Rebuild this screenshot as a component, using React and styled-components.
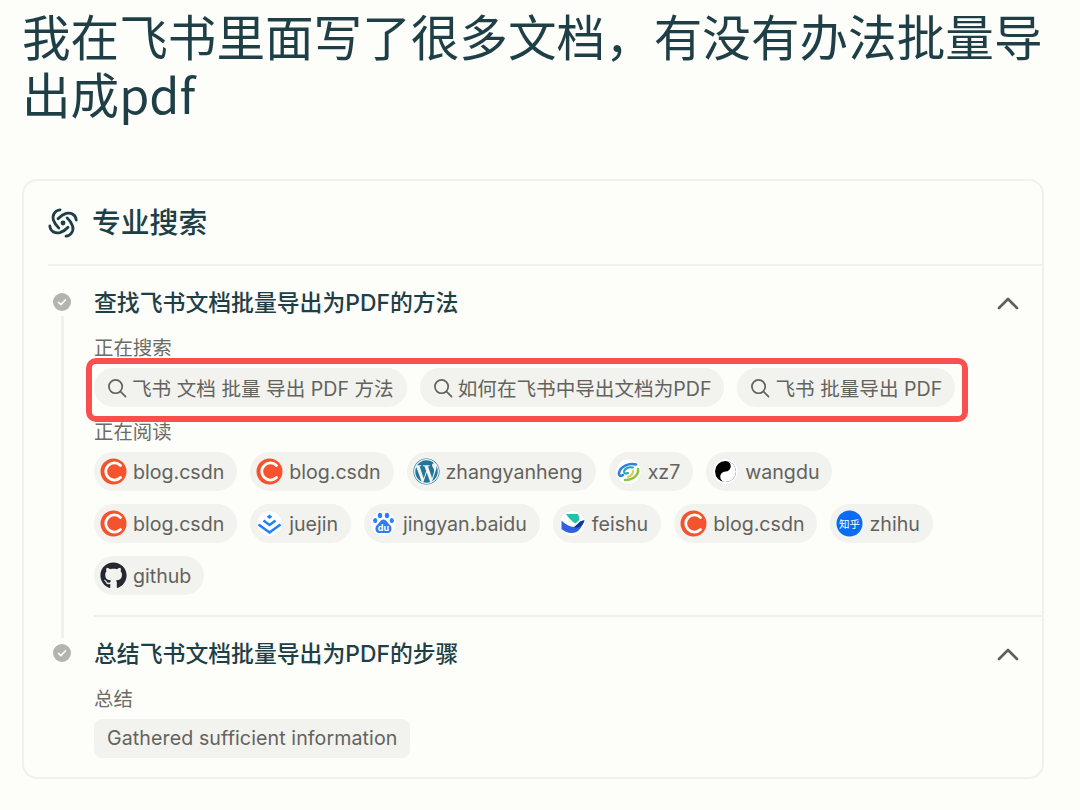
import React from "react"
import styled, { createGlobalStyle } from "styled-components"
import { FaGithub, FaWordpress } from "react-icons/fa"

const sans = `Inter, "Noto Sans CJK SC", "Liberation Sans", sans-serif`

const GlobalStyle = createGlobalStyle`
    html, body {
        margin: 0;
        padding: 0;
        background-color: #fdfdf9;
        font-family: ${sans};
    }
`

const Page = styled.div`
    width: 1080px;
    height: 810px;
    overflow: hidden;
    padding-top: 6px;
    box-sizing: border-box;
`

const Question = styled.h1`
    margin: 0;
    padding: 0 34px 0 22px;
    color: #1f3f47;
    font-family: "Noto Sans CJK SC", Inter, sans-serif;
    font-size: 48.6px;
    font-weight: 400;
    line-height: 58px;
`

const Card = styled.section`
    box-sizing: border-box;
    width: 1022px;
    height: 600px;
    margin: 57px 0 0 22px;
    padding-left: 24px;
    border: 2px solid #f0f0ec;
    border-radius: 15px;
`

const CardHeader = styled.div`
    display: flex;
    align-items: center;
    gap: 14px;
    height: 85px;
    border-bottom: 2px solid #f0f0ec;
    box-sizing: border-box;
`

const CardTitle = styled.h2`
    margin: 0;
    color: #1f3f47;
    font-size: 28.8px;
    font-weight: 500;
    line-height: 36px;
`

const Step = styled.div`
    display: flex;
`

const Rail = styled.div`
    display: flex;
    flex-direction: column;
    align-items: center;
    flex: none;
    width: 28px;
    margin-right: 18px;
    padding-top: 27px;
`

const Dot = styled.div`
    display: flex;
    align-items: center;
    justify-content: center;
    flex: none;
    width: 18px;
    height: 18px;
    border-radius: 50%;
    background-color: #b4b4ae;
`

const RailLine = styled.div`
    flex: 1;
    width: 3px;
    margin-top: 5px;
    margin-bottom: -21px;
    background-color: #f0f0ec;
`

const StepBody = styled.div`
    flex: 1;
    min-width: 0;
    padding-top: 21px;
    padding-bottom: ${(props) => (props.$divided ? "20px" : "0")};
    border-bottom: ${(props) => (props.$divided ? "2px solid #f0f0ec" : "none")};
`

const StepHeader = styled.div`
    display: flex;
    align-items: center;
    justify-content: space-between;
    height: 32px;
    padding-right: 23px;
    margin-bottom: 16px;
`

const StepTitle = styled.h3`
    margin: 0;
    color: #1f3f47;
    font-size: 22.85px;
    font-weight: 500;
    line-height: 32px;
`

const Label = styled.div`
    color: #6c6c66;
    font-size: 19.4px;
    line-height: 26px;
`

const ChipRow = styled.div`
    position: relative;
    display: flex;
    flex-wrap: wrap;
    gap: 13px;
    margin-top: ${(props) => props.$top}px;
    margin-bottom: ${(props) => props.$bottom || 0}px;
`

const Highlight = styled.div`
    position: absolute;
    top: -10px;
    left: -8px;
    width: 882px;
    height: 64px;
    box-sizing: border-box;
    border: 6px solid #f94f4f;
    border-radius: 10px;
`

const Chip = styled.div`
    display: flex;
    align-items: center;
    gap: ${(props) => (props.$search ? "5px" : "6px")};
    height: 39px;
    padding: 0 13px 0 ${(props) => (props.$search ? "13px" : "6px")};
    border-radius: 20px;
    background-color: #f2f2ef;
    color: #63635d;
    font-size: 19.6px;
    white-space: nowrap;
`

const IconBox = styled.span`
    display: flex;
    flex: none;
    width: 27px;
    height: 27px;
    color: ${(props) => props.$color || "inherit"};
`

const Summary = styled.div`
    display: inline-block;
    margin-top: 7px;
    padding: 0 13px;
    border-radius: 8px;
    background-color: #f2f2ef;
    color: #63635d;
    font-size: 19.6px;
    letter-spacing: 0.1px;
    line-height: 39px;
`

const LogoIcon = () => (
    <svg width="30" height="30" viewBox="-15 -15 30 30" fill="none" stroke="#1f3f47" strokeWidth="2.8" strokeLinecap="round">
        <circle r="2.4" fill="#1f3f47" stroke="none" />
        {[0, 90, 180, 270].map((angle) => (
            <path key={angle} d="M-3-13.2C-8-12.8-11-8-9.6-3C-8.8-0.5-7 2.5-4.2 5" transform={`rotate(${angle})`} />
        ))}
    </svg>
)

const CheckIcon = () => (
    <svg width="12" height="12" viewBox="0 0 12 12" fill="none" stroke="#fdfdf9" strokeWidth="1.6" strokeLinecap="round" strokeLinejoin="round">
        <path d="M2.5 6.3L5 8.6L9.5 3.8" />
    </svg>
)

const ChevronIcon = () => (
    <svg width="22" height="14" viewBox="0 0 22 14" fill="none" stroke="#5f5f59" strokeWidth="2.6" strokeLinecap="round" strokeLinejoin="round">
        <path d="M2 12L11 3L20 12" />
    </svg>
)

const SearchIcon = () => (
    <svg width="20" height="20" viewBox="0 0 21 21" fill="none" stroke="#63635d" strokeWidth="1.8" strokeLinecap="round" style={{ flex: "none" }}>
        <circle cx="9" cy="9" r="7" />
        <path d="M14 14L19.5 19.5" />
    </svg>
)

const CsdnIcon = () => (
    <svg viewBox="0 0 27 27">
        <circle cx="13.5" cy="13.5" r="13" fill="#f5532d" />
        <path d="M20.5 7.5A8.6 8.6 0 1 0 20.5 19.5" fill="none" stroke="#fff" strokeWidth="2.8" strokeLinecap="round" />
    </svg>
)

const JuejinIcon = () => (
    <svg viewBox="0 0 27 27">
        <circle cx="13.5" cy="13.5" r="13" fill="#fff" stroke="#eeeeee" />
        <path d="M13.5 4.5L16.3 6.8L13.5 9.1L10.7 6.8Z" fill="#1e80ff" />
        <path d="M7.5 10.5L13.5 15L19.5 10.5" fill="none" stroke="#1e80ff" strokeWidth="2.4" />
        <path d="M2.5 14.5L13.5 22.5L24.5 14.5" fill="none" stroke="#1e80ff" strokeWidth="2.6" />
    </svg>
)

const BaiduIcon = () => (
    <svg viewBox="0 0 27 27">
        <circle cx="13.5" cy="13.5" r="13" fill="#fff" stroke="#eeeeee" />
        <ellipse cx="10" cy="5.5" rx="2.2" ry="2.8" fill="#2f7cf6" />
        <ellipse cx="17" cy="5.5" rx="2.2" ry="2.8" fill="#2f7cf6" />
        <ellipse cx="5.2" cy="10.5" rx="2.1" ry="2.6" fill="#2f7cf6" />
        <ellipse cx="21.8" cy="10.5" rx="2.1" ry="2.6" fill="#2f7cf6" />
        <path d="M13.5 9.5C10.5 9.5 9.5 13 7 15C4.5 17 5 23 9 23H18C22 23 22.5 17 20 15C17.5 13 16.5 9.5 13.5 9.5Z" fill="#2f7cf6" />
        <text x="13.5" y="21" textAnchor="middle" fontSize="9" fontWeight="700" fill="#fff" fontFamily="Inter, sans-serif">du</text>
    </svg>
)

const FeishuIcon = () => (
    <svg viewBox="0 0 27 27">
        <circle cx="13.5" cy="13.5" r="13" fill="#fff" stroke="#eeeeee" />
        <path d="M7 4H19C20 6 20.5 8 20.5 10L16.5 13.5C13 11.5 9.5 8 7 4Z" fill="#25c2a8" />
        <path d="M2.5 10.5C6 14 10.5 17 15.5 17C19 14 21 10 25.5 10.5C23 16.5 20 23 12.5 23C8.5 23 5 21 2.5 19Z" fill="#2f62e0" />
        <path d="M15 17C19 14.5 21 10 25.5 10.5C24 15 20 19 15 17Z" fill="#15348f" />
    </svg>
)

const ZhihuIcon = () => (
    <svg viewBox="0 0 27 27">
        <circle cx="13.5" cy="13.5" r="13" fill="#0a6cf5" />
        <text x="13.5" y="17.5" textAnchor="middle" fontSize="10.5" fill="#fff" fontFamily="'Noto Sans CJK SC', sans-serif">知乎</text>
    </svg>
)

const Xz7Icon = () => (
    <svg viewBox="0 0 27 27" fill="none" strokeLinecap="round">
        <circle cx="13.5" cy="13.5" r="13" fill="#fff" stroke="#eeeeee" />
        <path d="M21 6.5C14 4.5 5 8.5 4 15C3.6 18 6 18.5 8 17" stroke="#2f80d8" strokeWidth="2.6" />
        <path d="M18 9.5C13 8.5 9 11 9 14C9 15.5 11 16 13 15" stroke="#27a0c8" strokeWidth="2" />
        <path d="M23 11C24 16 19 22 10 22" stroke="#8cc63e" strokeWidth="2.6" />
        <path d="M18 13C18 16 16 18 13 19" stroke="#e6c63a" strokeWidth="2" />
    </svg>
)

const WangduIcon = () => (
    <svg viewBox="0 0 27 27">
        <circle cx="13.5" cy="13.5" r="13" fill="#fff" stroke="#eeeeee" />
        <circle cx="13.5" cy="13.5" r="10.5" fill="#000" />
        <path d="M13.5 3A5.25 5.25 0 0 1 13.5 13.5A5.25 5.25 0 0 0 13.5 24A10.5 10.5 0 0 0 13.5 3Z" fill="#fff" />
        <circle cx="13.5" cy="8.2" r="1.9" fill="#000" />
        <circle cx="13.5" cy="18.8" r="1.9" fill="#fff" />
    </svg>
)

const WordpressIcon = () => (
    <IconBox $color="#21759b">
        <FaWordpress size={27} />
    </IconBox>
)

const GithubIcon = () => (
    <IconBox $color="#24292f">
        <FaGithub size={27} />
    </IconBox>
)

const Source = ({ icon: Icon, name, boxed = true }) => (
    <Chip>
        {boxed ? (
            <IconBox>
                <Icon />
            </IconBox>
        ) : (
            <Icon />
        )}
        {name}
    </Chip>
)

const question = "我在飞书里面写了很多文档\uFF0C有没有办法批量导出成pdf"

const searches = ["飞书 文档 批量 导出 PDF 方法", "如何在飞书中导出文档为PDF", "飞书 批量导出 PDF"]

const sources = [
    { icon: CsdnIcon, name: "blog.csdn" },
    { icon: CsdnIcon, name: "blog.csdn" },
    { icon: WordpressIcon, name: "zhangyanheng", boxed: false },
    { icon: Xz7Icon, name: "xz7" },
    { icon: WangduIcon, name: "wangdu" },
    { icon: CsdnIcon, name: "blog.csdn" },
    { icon: JuejinIcon, name: "juejin" },
    { icon: BaiduIcon, name: "jingyan.baidu" },
    { icon: FeishuIcon, name: "feishu" },
    { icon: CsdnIcon, name: "blog.csdn" },
    { icon: ZhihuIcon, name: "zhihu" },
    { icon: GithubIcon, name: "github", boxed: false },
]

const SourceGrid = styled(ChipRow)`
    width: 870px;
`

export default function App() {
    return (
        <Page>
            <GlobalStyle />
            <Question>{question}</Question>
            <Card>
                <CardHeader>
                    <LogoIcon />
                    <CardTitle>专业搜索</CardTitle>
                </CardHeader>
                <Step>
                    <Rail>
                        <Dot>
                            <CheckIcon />
                        </Dot>
                        <RailLine />
                    </Rail>
                    <StepBody $divided>
                        <StepHeader>
                            <StepTitle>查找飞书文档批量导出为PDF的方法</StepTitle>
                            <ChevronIcon />
                        </StepHeader>
                        <Label>正在搜索</Label>
                        <ChipRow $top={7} $bottom={12}>
                            {searches.map((text) => (
                                <Chip $search key={text}>
                                    <SearchIcon />
                                    {text}
                                </Chip>
                            ))}
                            <Highlight />
                        </ChipRow>
                        <Label>正在阅读</Label>
                        <SourceGrid $top={7}>
                            {sources.map((source, i) => (
                                <Source key={i} {...source} />
                            ))}
                        </SourceGrid>
                    </StepBody>
                </Step>
                <Step>
                    <Rail>
                        <Dot>
                            <CheckIcon />
                        </Dot>
                    </Rail>
                    <StepBody>
                        <StepHeader>
                            <StepTitle>总结飞书文档批量导出为PDF的步骤</StepTitle>
                            <ChevronIcon />
                        </StepHeader>
                        <Label>总结</Label>
                        <Summary>Gathered sufficient information</Summary>
                    </StepBody>
                </Step>
            </Card>
        </Page>
    )
}
